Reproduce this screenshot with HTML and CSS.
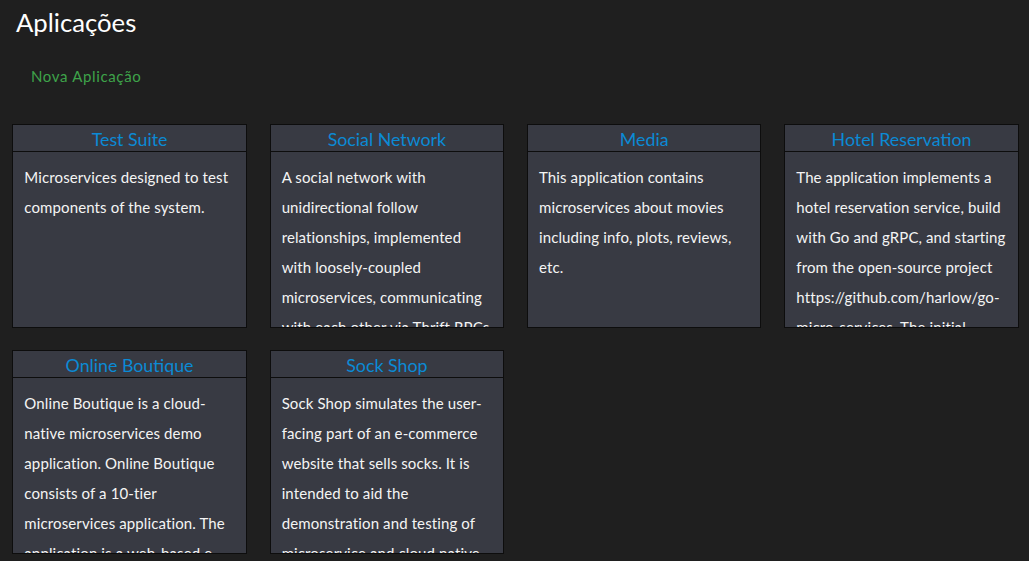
FILE: index.html
```html
<!DOCTYPE html>
<html lang="pt">
<head>
<meta charset="utf-8">
<title>Aplicações</title>
<link rel="stylesheet" href="styles.css">
</head>
<body>
<main class="page">
  <h1 class="page-title">Aplicações</h1>
  <div class="actions">
    <a class="new-app" href="#">Nova Aplicação</a>
  </div>
  <section class="app-grid">
    <article class="app-card">
      <header class="app-card__head">Test Suite</header>
      <div class="app-card__body">Microservices designed to test components of the system.</div>
    </article>
    <article class="app-card">
      <header class="app-card__head">Social Network</header>
      <div class="app-card__body">A social network with unidirectional follow relationships, implemented with loosely-coupled microservices, communicating with each other via Thrift RPCs.</div>
    </article>
    <article class="app-card">
      <header class="app-card__head">Media</header>
      <div class="app-card__body">This application contains microservices about movies including info, plots, reviews, etc.</div>
    </article>
    <article class="app-card">
      <header class="app-card__head">Hotel Reservation</header>
      <div class="app-card__body">The application implements a hotel reservation service, build with Go and gRPC, and starting from the open-source project https://github.com/harlow/go-micro-services. The initial project is extended in several ways.</div>
    </article>
    <article class="app-card">
      <header class="app-card__head">Online Boutique</header>
      <div class="app-card__body">Online Boutique is a cloud-native microservices demo application. Online Boutique consists of a 10-tier microservices application. The application is a web-based e-commerce app.</div>
    </article>
    <article class="app-card">
      <header class="app-card__head">Sock Shop</header>
      <div class="app-card__body">Sock Shop simulates the user-facing part of an e-commerce website that sells socks. It is intended to aid the demonstration and testing of microservice and cloud native technologies.</div>
    </article>
  </section>
</main>
</body>
</html>
```

FILE: styles.css
```css
html, body {
  margin: 0;
  padding: 0;
  background: #1f1f1f;
}

body {
  font-family: "Lato", "Noto Sans", sans-serif;
  color: #f2f2f2;
  overflow: hidden;
}

.page-title {
  margin: 0;
  padding: 7px 16px 0;
  font-size: 25.7px;
  font-weight: 400;
  line-height: 30px;
  color: #ffffff;
}

.actions {
  padding: 29px 31px 0;
  height: 58px;
  box-sizing: border-box;
}

.new-app {
  font-size: 15px;
  line-height: 20px;
  color: #3ea34a;
  text-decoration: none;
  letter-spacing: 0.65px;
}

.app-grid {
  display: grid;
  grid-template-columns: repeat(4, 234.5px);
  grid-auto-rows: 204px;
  column-gap: 22.83px;
  row-gap: 22px;
  padding: 29px 0 0 12.3px;
}

.app-card {
  background: #383a43;
  border: 1px solid #0d0d0d;
  display: flex;
  flex-direction: column;
  overflow: hidden;
}

.app-card__head {
  height: 27px;
  box-sizing: border-box;
  padding-top: 1px;
  border-bottom: 1px solid #0d0d0d;
  text-align: center;
  font-size: 17.8px;
  line-height: 26px;
  color: #0b8ad5;
}

.app-card__body {
  flex: 1;
  overflow: hidden;
  padding: 10px 10px 0 11px;
  font-size: 15px;
  line-height: 30px;
  letter-spacing: 0.12px;
  color: #f4f4f4;
}
```
